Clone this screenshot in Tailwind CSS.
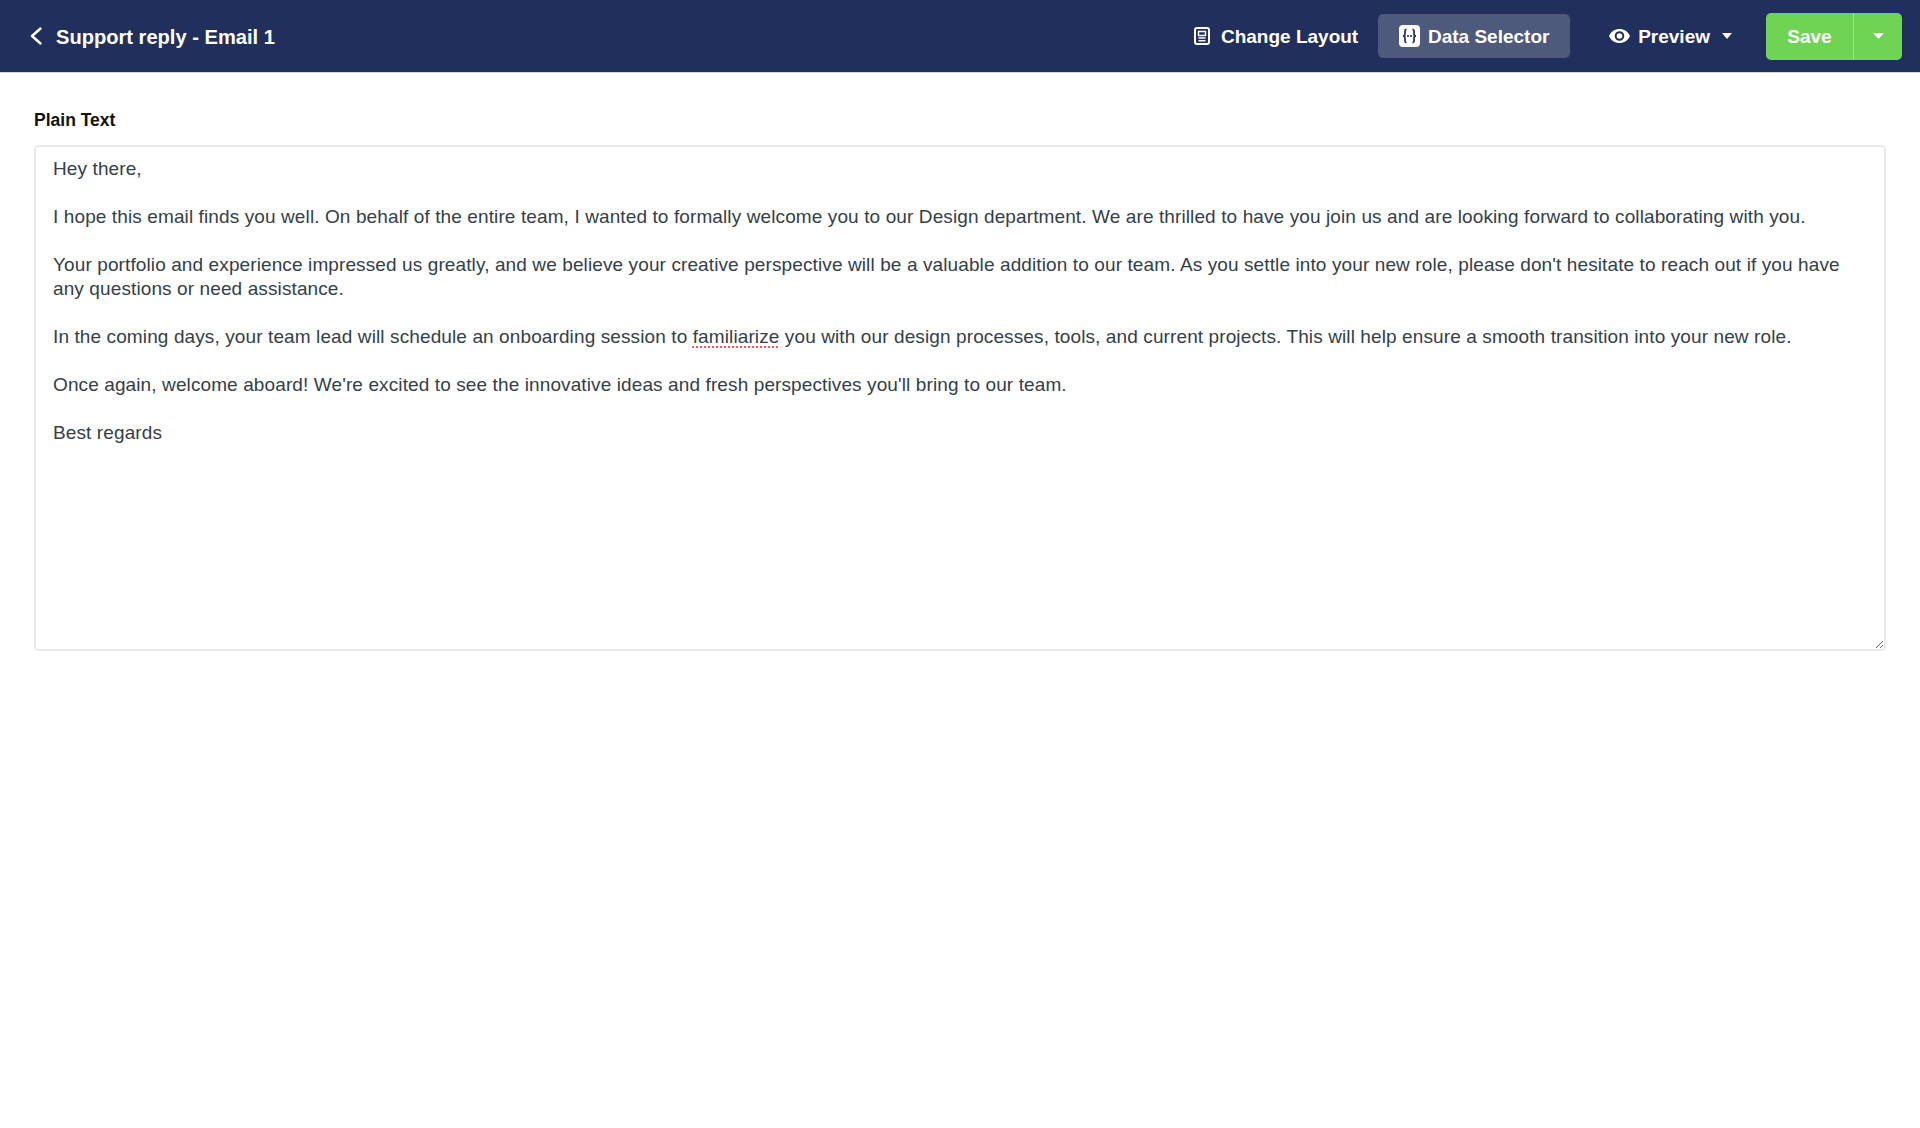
<!DOCTYPE html>
<html lang="en">
<head>
  <meta charset="UTF-8" />
  <title>Support reply - Email 1</title>
  <script src="https://cdn.jsdelivr.net/npm/@tailwindcss/browser@4"></script>
</head>
<body class="min-h-screen bg-white font-['Liberation_Sans',Arial,sans-serif]">

  <!-- Navbar -->
  <header class="flex h-[73px] items-center justify-between border-b border-[#d5d9e2] bg-[#212f5d] pl-[30px] pr-[18px] text-white">
    <div class="flex items-center gap-[14px]">
      <svg class="h-[18px] w-[12px]" viewBox="0 0 12 18" fill="none" stroke="currentColor" stroke-width="2.4" stroke-linecap="round" stroke-linejoin="round"><path d="M10.500 1.500 2 9l8.500 7.500" /></svg>
      <h1 class="mt-[2px] text-[20.100px] font-bold">Support reply - Email 1</h1>
    </div>
    <div class="flex items-center text-[19px] font-bold">
      <button class="flex items-center gap-[11px]">
        <svg class="h-[18px] w-[16px]" viewBox="0 0 16 18" fill="none"><rect x="1" y="1" width="14" height="16" rx="2" stroke="white" stroke-width="2" /><path d="M4.500 4.500h7v4h-7zM4.500 11h7M4.500 13.800h7" stroke="white" stroke-width="1.400" /></svg>
        <span class="mt-[2px]">Change Layout</span>
      </button>
      <button class="ml-[20px] flex h-[44px] w-[192px] items-center justify-center gap-[8px] rounded-[5px] bg-[#4e5a7c]">
        <svg class="h-[22px] w-[21px]" viewBox="0 0 21 22"><rect width="21" height="22" rx="4" fill="white" /><path d="M7.500 4.500C5.500 4.500 6 7 6 9s-2 2-2 2 2 0 2 2-.5 4.500 1.500 4.500M13.500 4.500c2 0 1.500 2.500 1.500 4.500s2 2 2 2-2 0-2 2 .5 4.500-1.500 4.500" fill="none" stroke="#2a375f" stroke-width="1.800" /><circle cx="9" cy="11" r="1.100" fill="#2a375f" /><circle cx="12" cy="11" r="1.100" fill="#2a375f" /></svg>
        <span class="mt-[2px]">Data Selector</span>
      </button>
      <button class="ml-[39px] flex items-center">
        <svg class="mr-[8px] h-[14px] w-[21px]" viewBox="0 0 21 14"><path fill-rule="evenodd" fill="white" d="M10.500 0C15 0 19 2.500 21 7c-2 4.500-6 7-10.500 7S2 11.500 0 7c2-4.500 6-7 10.500-7Zm0 2.200a4.800 4.800 0 1 0 0 9.600 4.800 4.800 0 0 0 0-9.600Z" /><circle cx="10.500" cy="7" r="2.800" fill="white" /></svg>
        <span class="mt-[2px]">Preview</span>
        <svg class="ml-[12px] h-[6px] w-[10px]" viewBox="0 0 10 6"><path d="M0 0h10L5 6z" fill="white" /></svg>
      </button>
      <div class="ml-[34px] flex h-[47px] overflow-hidden rounded-[5px] bg-[#6fd453]">
        <button class="w-[88px] border-r border-[#a3e58f] pt-[2px]">Save</button>
        <button class="flex w-[48px] items-center justify-center">
          <svg class="h-[6px] w-[11px]" viewBox="0 0 11 6"><path d="M0 0h11L5.500 6z" fill="white" /></svg>
        </button>
      </div>
    </div>
  </header>

  <!-- Main -->
  <main class="px-[34px] pt-[37px]">
    <label class="mb-[14px] block text-[17.500px] leading-[21px] font-bold text-[#111]">Plain Text</label>
    <div contenteditable="true" spellcheck="false" class="h-[506px] resize overflow-auto rounded-[5px] border-2 border-[#e9e9e9] px-[17px] py-[10px] text-[19px] leading-[24px] tracking-[0.11px] whitespace-pre-wrap text-[#334047] outline-none">Hey there,

I hope this email finds you well. On behalf of the entire team, I wanted to formally welcome you to our Design department. We are thrilled to have you join us and are looking forward to collaborating with you.

Your portfolio and experience impressed us greatly, and we believe your creative perspective will be a valuable addition to our team. As you settle into your new role, please don't hesitate to reach out if you have any questions or need assistance.

In the coming days, your team lead will schedule an onboarding session to <span class="underline decoration-[#f0595a] decoration-dotted decoration-2 underline-offset-[3px]">familiarize</span> you with our design processes, tools, and current projects. This will help ensure a smooth transition into your new role.

Once again, welcome aboard! We're excited to see the innovative ideas and fresh perspectives you'll bring to our team.

Best regards</div>
  </main>
</body>
</html>
